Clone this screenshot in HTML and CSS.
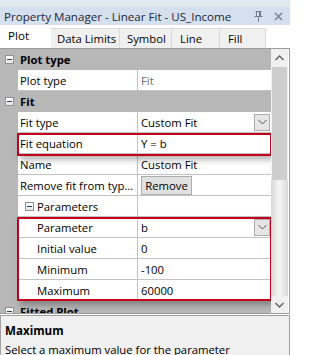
FILE: index.html
```html
<!DOCTYPE html>
<html>
<head>
<meta charset="utf-8">
<link rel="stylesheet" href="styles.css">
</head>
<body>
<div class="win">
  <div class="titlebar">
    <span class="title">Property Manager - Linear Fit - US_Income</span>
    <span class="tb-icons">
      <svg class="pin" width="9" height="11" viewBox="0 0 9 11"><path d="M1.5 0.5H7.5M2.5 0.5V5.5M5.5 0.5V5.5M6.5 0.5V5.5M0.5 5.5H8.5M4.5 5.5V10.5" stroke="#6f7d8c" stroke-width="1" fill="none"/></svg>
      <svg class="close" width="9" height="9" viewBox="0 0 9 9"><path d="M1 1L8 8M8 1L1 8" stroke="#7c8795" stroke-width="1.6" fill="none"/></svg>
    </span>
  </div>
  <div class="tabs">
    <div class="tab active w-plot">Plot</div>
    <div class="tab w-data">Data Limits</div>
    <div class="tab w-sym">Symbol</div>
    <div class="tab w-line">Line</div>
    <div class="tab w-fill">Fill</div>
  </div>
  <div class="gridwrap">
    <div class="grid">
      <div class="cat"><span class="minus"></span><span>Plot type</span></div>
      <div class="prop"><div class="gut"></div><div class="name">Plot type</div><div class="val dis">Fit</div></div>
      <div class="cat"><span class="minus"></span><span>Fit</span></div>
      <div class="prop"><div class="gut"></div><div class="name">Fit type</div><div class="val"><span>Custom Fit</span><span class="dd"><svg width="9" height="6" viewBox="0 0 9 6"><path d="M0.5 1L4.5 5L8.5 1" stroke="#555" stroke-width="1" fill="none"/></svg></span></div></div>
      <div class="prop"><div class="gut"></div><div class="name">Fit equation</div><div class="val">Y = b</div></div>
      <div class="prop"><div class="gut"></div><div class="name">Name</div><div class="val">Custom Fit</div></div>
      <div class="prop"><div class="gut"></div><div class="name">Remove fit from typ...</div><div class="val"><span class="btn">Remove</span></div></div>
      <div class="prop"><div class="gut"></div><div class="name sub"><span class="minus"></span><span>Parameters</span></div><div class="val"></div></div>
      <div class="prop"><div class="gut"></div><div class="name child">Parameter</div><div class="val"><span>b</span><span class="dd"><svg width="9" height="6" viewBox="0 0 9 6"><path d="M0.5 1L4.5 5L8.5 1" stroke="#555" stroke-width="1" fill="none"/></svg></span></div></div>
      <div class="prop"><div class="gut"></div><div class="name child">Initial value</div><div class="val">0</div></div>
      <div class="prop"><div class="gut"></div><div class="name child">Minimum</div><div class="val">-100</div></div>
      <div class="prop"><div class="gut"></div><div class="name child">Maximum</div><div class="val">60000</div></div>
      <div class="cat"><span class="minus"></span><span>Fitted Plot</span></div>
      <div class="hl hl1"></div>
      <div class="hl hl2"></div>
    </div>
    <div class="vscroll">
      <div class="arrow"><svg width="9" height="6" viewBox="0 0 9 6"><path d="M0.5 5L4.5 1L8.5 5" stroke="#606060" stroke-width="1.4" fill="none"/></svg></div>
      <div class="thumb"></div>
      <div class="track"></div>
      <div class="arrow"><svg width="9" height="6" viewBox="0 0 9 6"><path d="M0.5 1L4.5 5L8.5 1" stroke="#606060" stroke-width="1.4" fill="none"/></svg></div>
    </div>
  </div>
  <div class="desc">
    <div class="desc-title">Maximum</div>
    <div class="desc-text">Select a maximum value for the parameter</div>
  </div>
</div>
</body>
</html>
```

FILE: styles.css
```css
* { box-sizing: border-box; }
html, body { margin: 0; padding: 0; background: #ffffff; }
body {
  font-family: "Open Sans", "Noto Sans", sans-serif;
  font-size: 11.3px;
  color: #000;
}
.win {
  width: 290px;
  height: 355px;
  overflow: hidden;
  position: relative;
  background: #fff;
}
.titlebar {
  height: 25px;
  border-top: 7px solid #e2e8ef;
  background: #d4e0ed;
  display: flex;
  align-items: center;
  padding-left: 4px;
  color: #1d2738;
  font-size: 11.6px;
}
.title { flex: 1; white-space: nowrap; }
.tb-icons { display: flex; align-items: center; gap: 11px; padding-right: 7px; }
.pin { margin-top: 1px; }
.tabs {
  height: 23px;
  display: flex;
  align-items: flex-end;
  background: #fff;
}
.tab {
  height: 20px;
  background: #f0f0f0;
  border: 1px solid #d9d9d9;
  border-bottom: none;
  border-left: none;
  padding-left: 6px;
  display: flex;
  align-items: center;
  white-space: nowrap;
}
.tab.active {
  height: 23px;
  background: #fff;
  border: none;
  padding-left: 8px;
  padding-bottom: 2px;
  font-size: 11.6px;
}
.w-plot { width: 51px; }
.w-data { width: 69px; }
.w-sym { width: 52px; padding-left: 7px; }
.w-line { width: 48px; padding-left: 8px; }
.w-fill { width: 46px; padding-left: 8px; }

.gridwrap {
  display: flex;
  height: 266px;
  border-top: 1px solid #9c9c9c;
  border-bottom: 1px solid #9c9c9c;
  border-right: 1px solid #9c9c9c;
}
.grid {
  width: 271px;
  position: relative;
  overflow: hidden;
  background: #b7b7b7;
}
.cat {
  height: 21px;
  display: flex;
  align-items: center;
  font-weight: bold;
  padding-left: 5px;
  gap: 6px;
  padding-bottom: 1px;
}
.minus {
  width: 9px;
  height: 9px;
  border: 1px solid #919191;
  background: linear-gradient(#ffffff, #e4e4e4);
  position: relative;
  flex: none;
}
.minus::after {
  content: "";
  position: absolute;
  left: 1px;
  top: 3px;
  width: 5px;
  height: 1px;
  background: #2b3f5c;
}
.prop {
  height: 21px;
  display: flex;
}
.gut { width: 18px; flex: none; }
.name {
  width: 120px;
  flex: none;
  background: #fff;
  border-right: 1px solid #c2c2c2;
  border-bottom: 1px solid #c2c2c2;
  padding-left: 2px;
  display: flex;
  align-items: center;
  white-space: nowrap;
  overflow: hidden;
}
.name.child { padding-left: 19px; }
.name.sub { padding-left: 7px; gap: 3px; }
.val {
  flex: 1;
  background: #fff;
  border-bottom: 1px solid #c2c2c2;
  padding-left: 3px;
  display: flex;
  align-items: center;
  white-space: nowrap;
}
.val.dis { color: #6d6d6d; }
.dd {
  margin-left: auto;
  margin-right: 1px;
  width: 16px;
  height: 17px;
  border: 1px solid #adadad;
  background: #e5e5e5;
  display: flex;
  align-items: center;
  justify-content: center;
}
.btn {
  width: 51px;
  height: 19px;
  border: 1px solid #adadad;
  background: #e1e1e1;
  display: flex;
  align-items: center;
  justify-content: center;
}
.hl {
  position: absolute;
  left: 17px;
  width: 255px;
  border: 2px solid #c4001c;
  box-shadow: 3px 4px 6px rgba(0, 0, 0, 0.28);
  pointer-events: none;
}
.hl1 { top: 84px; height: 23px; }
.hl2 { top: 168px; height: 84px; }

.vscroll {
  width: 17px;
  display: flex;
  flex-direction: column;
  background: #f0f0f0;
}
.arrow {
  height: 17px;
  display: flex;
  align-items: center;
  justify-content: center;
  background: #f0f0f0;
}
.thumb {
  height: 113px;
  margin: 1px 1px 0 1px;
  background: #cdcdcd;
}
.track {
  flex: 1;
  background: linear-gradient(to right, #d8d8d8, #f4f4f4 45%, #f4f4f4 55%, #d8d8d8);
}
.desc {
  height: 41px;
  margin-top: 1px;
  background: #f0f0f0;
  border: 1px solid #a0a0a0;
  border-bottom: none;
  padding: 5px 0 0 4px;
  color: #000;
}
.desc-title { font-weight: bold; line-height: 19px; font-size: 11.6px; }
.desc-text { line-height: 19px; }
```
